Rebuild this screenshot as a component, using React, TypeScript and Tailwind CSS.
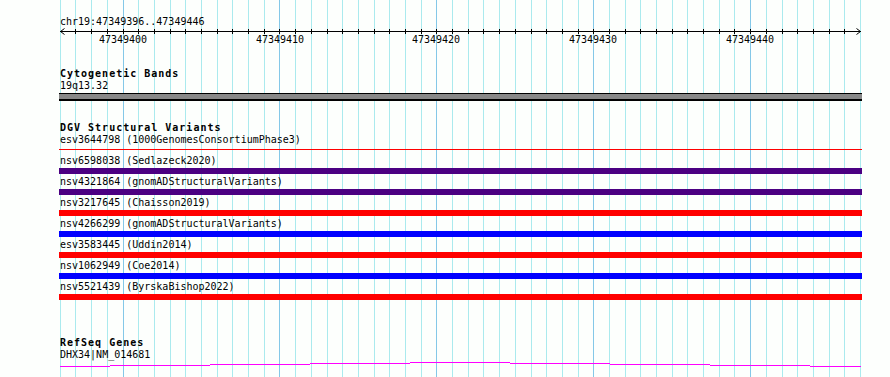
const gridXs = Array.from({ length: 52 }, (_, k) => Math.floor(60.3 + 15.69 * k));

const rulerLabels = [
  { label: "47349400", pos: "left-[123px]" },
  { label: "47349410", pos: "left-[280px]" },
  { label: "47349420", pos: "left-[436px]" },
  { label: "47349430", pos: "left-[593px]" },
  { label: "47349440", pos: "left-[750px]" },
];

const variants = [
  { id: "esv3644798", study: "1000GenomesConsortiumPhase3", bar: "mt-[3px] h-px bg-[#ff0000]" },
  { id: "nsv6598038", study: "Sedlazeck2020", bar: "mt-px h-[6px] bg-[#4b0082]" },
  { id: "nsv4321864", study: "gnomADStructuralVariants", bar: "mt-px h-[6px] bg-[#4b0082]" },
  { id: "nsv3217645", study: "Chaisson2019", bar: "mt-px h-[6px] bg-[#ff0000]" },
  { id: "nsv4266299", study: "gnomADStructuralVariants", bar: "mt-px h-[6px] bg-[#0000ff]" },
  { id: "esv3583445", study: "Uddin2014", bar: "mt-px h-[6px] bg-[#ff0000]" },
  { id: "nsv1062949", study: "Coe2014", bar: "mt-px h-[6px] bg-[#0000ff]" },
  { id: "nsv5521439", study: "ByrskaBishop2022", bar: "mt-px h-[6px] bg-[#ff0000]" },
];

// intron line of DHX34, drawn as small steps (x1, x2, y)
const intron = [
  [60, 110, 5], [110, 210, 4], [210, 310, 3], [310, 410, 2], [410, 510, 1],
  [510, 610, 2], [610, 710, 3], [710, 810, 4], [810, 861, 5],
];

function Heading({ children }: { children: string }) {
  return <div className="pl-px h-[12px] leading-[12px] font-bold tracking-[1px]">{children}</div>;
}

export default function App() {
  return (
    <div className="relative w-[890px] h-[377px] overflow-hidden bg-[#fdfffd] text-[10px] text-black font-['DejaVu_Sans_Mono',monospace]">
      {/* gridlines */}
      <svg className="absolute inset-0" width="890" height="377" shapeRendering="crispEdges" aria-hidden="true">
        {gridXs.map((x, k) => (
          <rect key={k} x={x} y={0} width={1} height={377} fill={k % 10 === 4 ? "#84c8e8" : "#aaeaee"} />
        ))}
      </svg>

      <div className="relative pt-[16px]">
        <div className="pl-[60px] h-[12px] leading-[12px] whitespace-nowrap">chr19:47349396..47349446</div>

        {/* ruler */}
        <div className="relative h-[18px]">
          <svg className="block" width="890" height="8" shapeRendering="crispEdges" aria-hidden="true">
            <rect x={60} y={3} width={801} height={1} fill="#000" />
            {gridXs.slice(1, 51).map((x, k) => (
              <rect key={k} x={x} y={1} width={1} height={5} fill="#000" />
            ))}
            <path d="M64.5 0.5 L60.5 3.5 L64.5 6.5" fill="none" stroke="#000" shapeRendering="auto" />
            <path d="M856.5 0.5 L860.5 3.5 L856.5 6.5" fill="none" stroke="#000" shapeRendering="auto" />
          </svg>
          {rulerLabels.map((l) => (
            <span
              key={l.label}
              className={`absolute top-[6px] -translate-x-1/2 h-[12px] leading-[12px] ${l.pos}`}
            >
              {l.label}
            </span>
          ))}
        </div>

        {/* Cytogenetic Bands */}
        <section className="pl-[59px] mt-[22px]">
          <Heading>Cytogenetic Bands</Heading>
          <div className="pl-px h-[12px] leading-[12px]">19q13.32</div>
          <div className="mt-px w-[803px] h-[8px] border-t border-b-2 border-black bg-[#888888]" />
        </section>

        {/* DGV Structural Variants */}
        <section className="pl-[59px] mt-[21px]">
          <Heading>DGV Structural Variants</Heading>
          {variants.map((v) => (
            <div key={v.id} className="h-[21px]">
              <div className="pl-px h-[12px] leading-[12px] whitespace-nowrap">
                {v.id} ({v.study})
              </div>
              <div className={`w-[803px] ${v.bar}`} />
            </div>
          ))}
        </section>

        {/* RefSeq Genes */}
        <section className="pl-[59px] mt-[35px]">
          <Heading>RefSeq Genes</Heading>
          <div className="pl-px h-[12px] leading-[12px]">DHX34|NM_014681</div>
          <svg className="block -ml-[59px]" width="890" height="7" shapeRendering="crispEdges" aria-hidden="true">
            {intron.map(([x1, x2, y], i) => (
              <rect key={i} x={x1} y={y} width={x2 - x1} height={1} fill="#ff00ff" />
            ))}
          </svg>
        </section>
      </div>
    </div>
  );
}
